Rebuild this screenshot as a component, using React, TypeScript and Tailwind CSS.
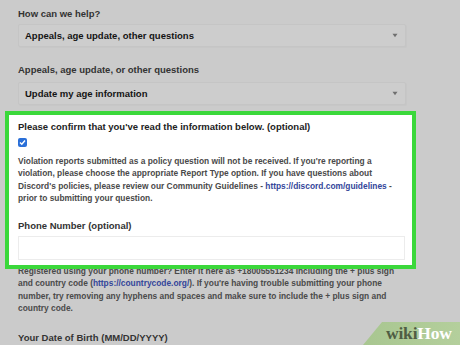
import React from "react";

function Caret() {
  return (
    <svg width="6" height="5" viewBox="0 0 6 5" className="shrink-0">
      <path d="M0.5 0.8 L5.5 0.8 L3 4.2 Z" fill="#6f6f6f" />
    </svg>
  );
}

function Select({ text }: { text: string }) {
  return (
    <div className="flex items-center justify-between h-[23px] bg-[#cdcdcd] border border-[#c5c5c5] rounded-[2px] pl-[6px] pr-[7px] shadow-[1px_1px_0_#c7c7c7]">
      <span className="text-[9.5px] leading-[12px] font-bold text-[#141414]">{text}</span>
      <Caret />
    </div>
  );
}

export default function App() {
  const link = "text-[#34469a]";
  return (
    <div className="relative w-[460px] h-[345px] overflow-hidden bg-[#cbcbcb] font-['Liberation_Sans',Arial,sans-serif]">
      <div className="flex flex-col pl-[18px] pr-[54px] pt-[8px]">
        <div className="text-[9.5px] leading-[12px] font-bold text-[#333]">How can we help?</div>
        <div className="mt-[4px]">
          <Select text="Appeals, age update, other questions" />
        </div>
        <div className="mt-[17px] text-[9.5px] leading-[12px] font-bold text-[#333]">
          Appeals, age update, or other questions
        </div>
        <div className="mt-[6px]">
          <Select text="Update my age information" />
        </div>

        <div className="relative z-10 mt-[6px] ml-[-13px] mr-[-10px] h-[158px] border-4 border-[#3bd83b] bg-white pl-[9px] pr-[7px] pt-[5px] flex flex-col">
          <div className="text-[9.5px] leading-[14px] font-bold text-[#222]">
            Please confirm that you've read the information below. (optional)
          </div>
          <div className="mt-[4px] w-[9px] h-[9px] rounded-[2px] bg-[#2a6fd8] flex items-center justify-center">
            <svg width="7" height="7" viewBox="0 0 7 7">
              <path d="M1 3.6 L2.8 5.3 L6 1.5" stroke="white" strokeWidth="1.4" fill="none" />
            </svg>
          </div>
          <div className="mt-[8px] text-[8.4px] leading-[12.4px] font-bold text-[#4a4a4a] whitespace-nowrap">
            Violation reports submitted as a policy question will not be received. If you're reporting a
            <br />
            violation, please choose the appropriate Report Type option. If you have questions about
            <br />
            Discord's policies, please review our Community Guidelines - <span className={link}>https://discord.com/guidelines</span> -
            <br />
            prior to submitting your question.
          </div>
          <div className="mt-[15px] text-[9.5px] leading-[12px] font-bold text-[#333]">Phone Number (optional)</div>
          <div className="mt-[4px] h-[24px] border border-[#ececec] bg-white" />
        </div>

        <div className="mt-[-4px] text-[8.4px] leading-[12.4px] font-bold text-[#4a4a4a] whitespace-nowrap">
          Registered using your phone number? Enter it here as +18005551234 including the + plus sign
          <br />
          and country code (<span className={link}>https://countrycode.org/</span>). If you're having trouble submitting your phone
          <br />
          number, try removing any hyphens and spaces and make sure to include the + plus sign and
          <br />
          country code.
        </div>
        <div className="mt-[17px] text-[9.5px] leading-[12px] font-bold text-[#333]">
          Your Date of Birth (MM/DD/YYYY)
        </div>
      </div>

      <div className="absolute right-0 bottom-0 w-[100px] h-[23px]">
        <svg width="100" height="23" viewBox="0 0 100 23" className="absolute inset-0">
          <defs>
            <linearGradient id="wg" x1="0" y1="0" x2="1" y2="0">
              <stop offset="0" stopColor="#a8c690" />
              <stop offset="1" stopColor="#b4cf9c" />
            </linearGradient>
          </defs>
          <polygon points="22,0 100,0 100,23 3,23" fill="url(#wg)" />
        </svg>
        <div className="absolute left-[26px] top-[1px] font-['Liberation_Serif',serif] font-bold text-[17.5px] leading-[20px] tracking-[-0.2px]">
          <span className="text-[#4f5d43]">wiki</span>
          <span className="text-white">How</span>
        </div>
      </div>
    </div>
  );
}
